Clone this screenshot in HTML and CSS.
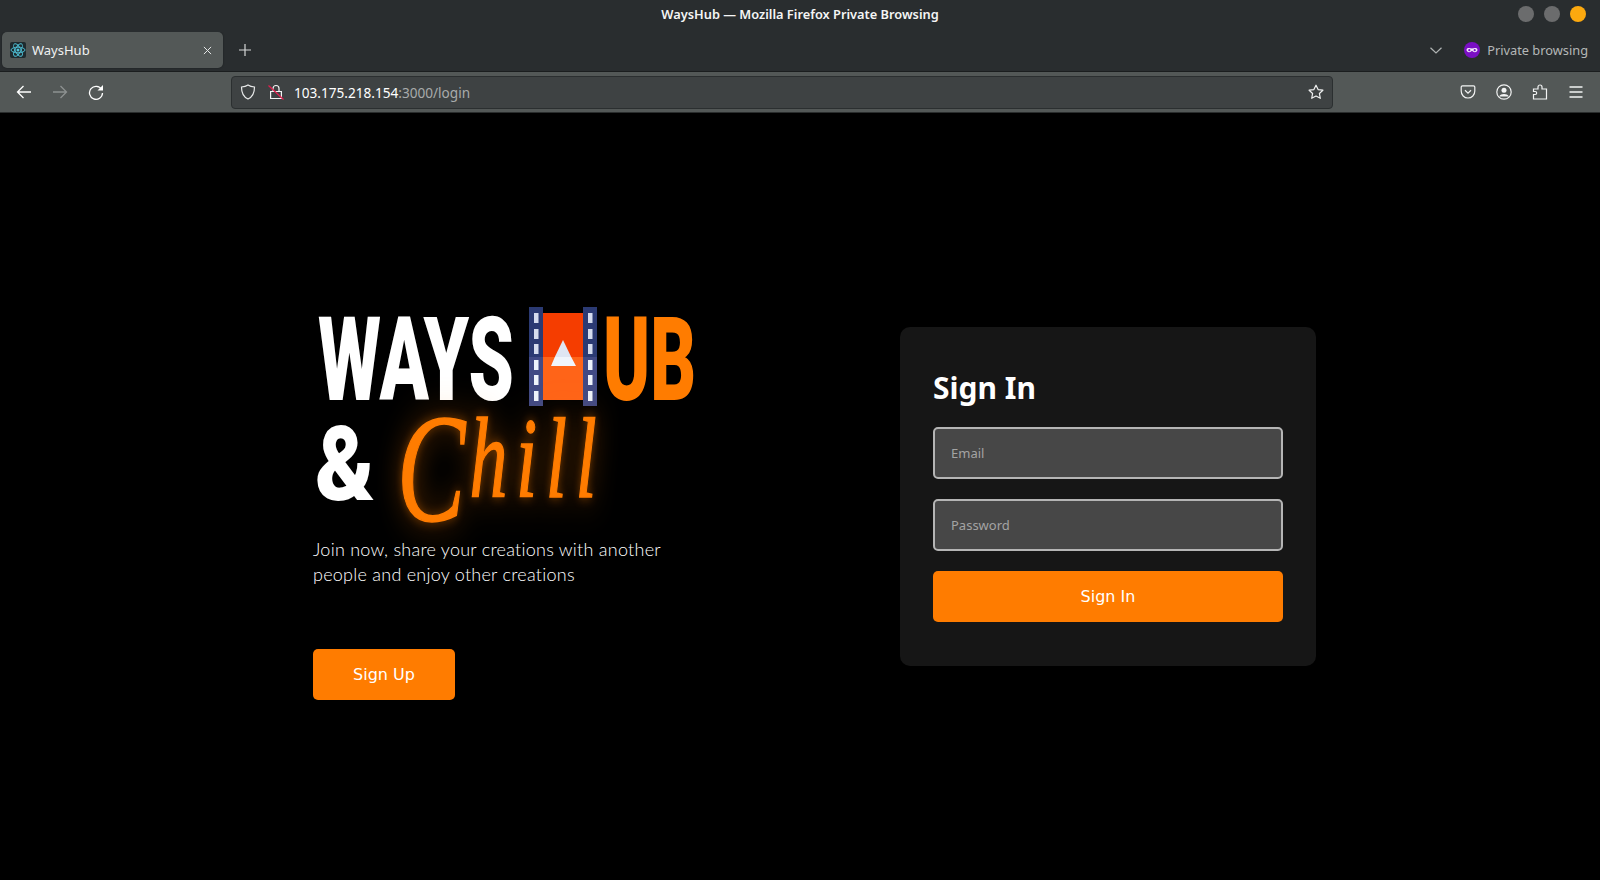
FILE: index.html
```html
<!DOCTYPE html>
<html lang="en">
<head>
    <meta charset="UTF-8">
    <meta name="viewport" content="width=device-width, initial-scale=1.0">
    <title>WaysHub</title>
    <link rel="stylesheet" href="styles.css">
</head>
<body>
    <div class="titlebar">
        <span class="window-title">WaysHub — Mozilla Firefox Private Browsing</span>
        <div class="window-buttons">
            <span class="dot"></span>
            <span class="dot"></span>
            <span class="dot dot-close"></span>
        </div>
    </div>
    <div class="tabstrip">
        <div class="tab">
            <svg class="favicon" viewBox="0 0 16 16">
                <rect width="16" height="16" rx="2" fill="#1f2a2e"/>
                <circle cx="8" cy="8" r="1.5" fill="#4fc3d9"/>
                <g fill="none" stroke="#4fc3d9" stroke-width="0.9">
                    <ellipse cx="8" cy="8" rx="7" ry="2.8"/>
                    <ellipse cx="8" cy="8" rx="7" ry="2.8" transform="rotate(60 8 8)"/>
                    <ellipse cx="8" cy="8" rx="7" ry="2.8" transform="rotate(120 8 8)"/>
                </g>
            </svg>
            <span class="tab-label">WaysHub</span>
            <svg class="tab-close" viewBox="0 0 10 10"><path d="M1 1l8 8M9 1l-8 8" stroke="#e6e8e8" stroke-width="1.1" fill="none"/></svg>
        </div>
        <svg class="new-tab" viewBox="0 0 12 12"><path d="M6 0v12M0 6h12" stroke="#d5d8d8" stroke-width="1.2" fill="none"/></svg>
        <svg class="tab-list" viewBox="0 0 12 7"><path d="M0.5 0.8L6 6l5.5-5.2" stroke="#b0b4b4" stroke-width="1.2" fill="none"/></svg>
        <div class="private">
            <svg class="private-icon" viewBox="0 0 16 16">
                <circle cx="8" cy="8" r="8" fill="#7a0fc4"/>
                <path d="M2.6 7.2C3 5.9 5.4 5.6 8 6.6c2.6-1 5-.7 5.4.6.4 1.6-.8 3-2.6 3-1.2 0-2-.7-2.8-1.4-.8.7-1.600 1.400-2.800 1.400-1.800 0-3-1.400-2.600-3z" fill="#f3e8fb"/>
                <circle cx="5.3" cy="8.2" r="1.1" fill="#7a0fc4"/>
                <circle cx="10.7" cy="8.2" r="1.1" fill="#7a0fc4"/>
            </svg>
            <span>Private browsing</span>
        </div>
    </div>
    <div class="navbar">
        <div class="nav-group">
            <div class="nav-btn">
                <svg viewBox="0 0 16 16"><path d="M15 8H1.5M7.5 2L1.5 8l6 6" stroke="#fff" stroke-width="1.3" fill="none"/></svg>
            </div>
            <div class="nav-btn">
                <svg viewBox="0 0 16 16"><path d="M1 8h13.5M8.5 2l6 6-6 6" stroke="#8d9191" stroke-width="1.3" fill="none"/></svg>
            </div>
            <div class="nav-btn">
                <svg viewBox="0 0 16 16"><path d="M13.6 5.5A6.5 6.5 0 1 0 14.5 9" stroke="#fff" stroke-width="1.3" fill="none"/><path d="M15 1v5.500H9.500z" fill="#fff"/></svg>
            </div>
        </div>
        <div class="urlbar">
            <svg class="url-icon" viewBox="0 0 16 16"><path d="M8 1c2 1.300 4 1.800 6.500 2 0 5-.8 9.500-6.500 12C2.300 12.500 1.500 8 1.500 3 4 2.800 6 2.300 8 1z" stroke="#e8eaea" stroke-width="1.2" fill="none"/></svg>
            <svg class="url-icon lock" viewBox="0 0 16 16">
                <path d="M5 7.500V4.500a3 3 0 0 1 6 0V7.500M2.600 7.500h10.800v7H2.600z" stroke="#f2f3f3" stroke-width="1.2" fill="none"/>
                <path d="M0.500 1.500l15 14" stroke="#e0204f" stroke-width="1.300"/>
            </svg>
            <span class="url"><span class="url-host">103.175.218.154</span>:3000/login</span>
            <svg class="url-star" viewBox="0 0 16 16"><path d="M8 1.200l2.100 4.400 4.800.6-3.500 3.300.9 4.800L8 12l-4.300 2.300.9-4.800L1.100 6.200l4.800-.6z" stroke="#f0f1f1" stroke-width="1.2" stroke-linejoin="round" fill="none"/></svg>
        </div>
        <div class="nav-group">
            <div class="nav-btn">
                <svg viewBox="0 0 16 16"><path d="M2.500 1.800h11c.8 0 1.300.5 1.300 1.300v4A6.800 6.800 0 0 1 8 14a6.800 6.800 0 0 1-6.800-6.900v-4c0-.8.5-1.300 1.300-1.300z" stroke="#f2f3f3" stroke-width="1.2" fill="none"/><path d="M5 6.300l3 2.900 3-2.900" stroke="#f2f3f3" stroke-width="1.2" fill="none"/></svg>
            </div>
            <div class="nav-btn">
                <svg viewBox="0 0 16 16"><circle cx="8" cy="8" r="7.200" stroke="#f2f3f3" stroke-width="1.2" fill="none"/><circle cx="8" cy="6.300" r="2.500" fill="#f2f3f3"/><path d="M3.300 12.200c.8-1.500 2.600-2.300 4.700-2.300s3.900.8 4.700 2.300v.4H3.300z" fill="#f2f3f3"/></svg>
            </div>
            <div class="nav-btn">
                <svg viewBox="0 0 16 16"><path d="M6.500 15H1.500v-4.500h1.700a1.500 1.500 0 0 0 0-3H1.500V5H6V3a2 2 0 0 1 4 0v2h4.500v10H6.500" stroke="#f2f3f3" stroke-width="1.2" fill="none"/></svg>
            </div>
            <div class="nav-btn">
                <svg viewBox="0 0 16 16"><path d="M1.500 3h13M1.500 8h13M1.500 13h13" stroke="#f2f3f3" stroke-width="1.3" fill="none"/></svg>
            </div>
        </div>
    </div>
    <main class="page">
        <section class="intro">
            <svg class="logo" viewBox="0 0 400 240" width="400" height="240">
                <text class="logo-word logo-white" x="5" y="107" textLength="196" lengthAdjust="spacingAndGlyphs">WAYS</text>
                <text class="logo-word logo-orange" x="290" y="107" textLength="93" lengthAdjust="spacingAndGlyphs">UB</text>
                <rect x="230" y="20" width="40" height="44" fill="#f53d00"/>
                <rect x="230" y="64" width="40" height="43" fill="#ff6418"/>
                <rect x="216" y="14" width="14" height="50" fill="#2b3a73"/>
                <rect x="216" y="64" width="14" height="49" fill="#414a85"/>
                <rect x="270" y="14" width="14" height="50" fill="#2b3a73"/>
                <rect x="270" y="64" width="14" height="49" fill="#414a85"/>
                <g fill="#d5dcee">
                    <rect x="221" y="20" width="4.500" height="10"/><rect x="221" y="36" width="4.500" height="10"/><rect x="221" y="51" width="4.500" height="10"/>
                    <rect x="275" y="20" width="4.500" height="10"/><rect x="275" y="36" width="4.500" height="10"/><rect x="275" y="51" width="4.500" height="10"/>
                </g>
                <g fill="#eef3fb">
                    <rect x="221" y="67" width="4.500" height="10"/><rect x="221" y="82" width="4.500" height="10"/><rect x="221" y="98" width="4.500" height="10"/>
                    <rect x="275" y="67" width="4.500" height="10"/><rect x="275" y="82" width="4.500" height="10"/><rect x="275" y="98" width="4.500" height="10"/>
                </g>
                <path d="M250 47l-8.200 17h16.400z" fill="#dfe6f3"/>
                <path d="M241.800 64L238 73h25l-4.800-9z" fill="#f0f5fc"/>
                <text class="logo-amp" x="2" y="207" textLength="60" lengthAdjust="spacingAndGlyphs">&amp;</text>
                <text class="logo-chill" transform="translate(84 0) scale(0.66 1)" x="0" y="228"><tspan class="chill-big">C</tspan><tspan class="chill-small" x="110" y="204">hill</tspan></text>
            </svg>
            <p class="tagline">Join now, share your creations with another people and enjoy other creations</p>
            <button class="btn btn-signup" type="button">Sign Up</button>
        </section>
        <form class="card">
            <h1 class="card-title">Sign In</h1>
            <input class="field" type="email" placeholder="Email">
            <input class="field" type="password" placeholder="Password">
            <button class="btn btn-wide" type="button">Sign In</button>
        </form>
    </main>
</body>
</html>
```
FILE: styles.css
```css
* {
    box-sizing: border-box;
}
html, body {
    height: 100%;
}
body {
    margin: 0;
    display: flex;
    flex-direction: column;
    overflow: hidden;
    background-color: #000;
    font-family: "Noto Sans", sans-serif;
}
svg {
    display: block;
}

/* browser chrome */
.titlebar {
    position: relative;
    height: 32px;
    flex: none;
    display: flex;
    align-items: center;
    justify-content: center;
    background-color: #292d2f;
}
.window-title {
    margin-top: -4px;
    color: #f4f5f5;
    font-size: 12.800px;
    font-weight: 600;
}
.window-buttons {
    position: absolute;
    top: 6px;
    right: 14px;
    display: flex;
    gap: 10px;
}
.dot {
    width: 16px;
    height: 16px;
    border-radius: 50%;
    background-color: #6b6c6d;
}
.dot-close {
    background-color: #fca90f;
}
.tabstrip {
    height: 39px;
    flex: none;
    display: flex;
    align-items: flex-start;
    padding-left: 2px;
    background-color: #292d2f;
}
.tab {
    width: 221px;
    height: 36px;
    display: flex;
    align-items: center;
    padding: 0 10px 0 8px;
    border-radius: 5px;
    background-color: #535857;
    box-shadow: 0 0 2px rgba(0, 0, 0, 0.4);
}
.favicon {
    width: 16px;
    height: 16px;
    margin-right: 6px;
}
.tab-label {
    flex: 1;
    color: #f0f1f1;
    font-size: 13px;
}
.tab-close {
    width: 9px;
    height: 9px;
    margin-right: 1px;
}
.new-tab {
    width: 12px;
    height: 12px;
    margin: 12px 0 0 16px;
}
.tab-list {
    width: 12px;
    height: 7px;
    margin: 15px 0 0 auto;
}
.private {
    display: flex;
    align-items: center;
    gap: 7px;
    height: 36px;
    margin-left: 22px;
    padding-right: 12px;
    color: #b4b7b7;
    font-size: 12.800px;
}
.private-icon {
    width: 16px;
    height: 16px;
}
.navbar {
    height: 42px;
    flex: none;
    display: flex;
    align-items: center;
    padding: 0 6px;
    border-top: 1px solid #1b1e1f;
    border-bottom: 1px solid #2a2d2d;
    background-color: #535857;
}
.nav-group {
    display: flex;
}
.nav-btn {
    width: 36px;
    height: 32px;
    display: flex;
    align-items: center;
    justify-content: center;
}
.nav-btn svg {
    width: 16px;
    height: 16px;
}
.urlbar {
    flex: 1;
    height: 33px;
    display: flex;
    align-items: center;
    margin: 0 117px;
    padding: 0 8px;
    border: 1px solid #2b2f30;
    border-radius: 4px;
    background-color: #3e4243;
}
.url-icon {
    width: 16px;
    height: 16px;
}
.lock {
    margin-left: 12px;
}
.url {
    flex: 1;
    margin-left: 10px;
    color: #a8abab;
    font-size: 13.600px;
}
.url-host {
    color: #fff;
}
.url-star {
    width: 16px;
    height: 16px;
}

/* login page */
.page {
    flex: 1;
    display: flex;
    align-items: center;
    padding-left: 313px;
    background-color: #000;
}
.intro {
    width: 587px;
}
.logo {
    overflow: visible;
}
.logo-word {
    font-family: "Roboto", sans-serif;
    font-size: 116px;
    font-weight: 900;
}
.logo-white {
    fill: #fff;
}
.logo-orange {
    fill: #ff7c00;
}
.logo-amp {
    font-family: "Roboto", sans-serif;
    font-size: 104px;
    font-weight: 900;
    fill: #fff;
}
.logo-chill {
    font-family: "Liberation Serif", serif;
    font-style: italic;
    fill: #ff7c00;
    stroke: #ff7c00;
    stroke-width: 1.500px;
    filter: drop-shadow(0 0 6px rgba(255, 124, 0, 0.4)) drop-shadow(0 0 18px rgba(255, 124, 0, 0.4));
}
.chill-big {
    font-size: 155px;
}
.chill-small {
    font-size: 115px;
    letter-spacing: 13px;
}
.tagline {
    width: 360px;
    margin: 4px 0 62px;
    color: #fff;
    font-family: "Lato", sans-serif;
    font-size: 18px;
    font-weight: 300;
    letter-spacing: 0.25px;
    line-height: 25px;
}
.btn {
    display: block;
    height: 51px;
    border: none;
    border-radius: 5px;
    background-color: #ff7c00;
    color: #fff;
    font-family: "DejaVu Sans", sans-serif;
    font-size: 16px;
}
.btn-signup {
    width: 142px;
}
.btn-wide {
    width: 100%;
}
.card {
    width: 416px;
    height: 339px;
    padding: 33px;
    border-radius: 10px;
    background-color: #161616;
}
.card-title {
    margin: 0 0 12px;
    color: #fff;
    font-size: 30px;
    font-weight: 700;
    line-height: 55px;
}
.field {
    display: block;
    width: 100%;
    height: 52px;
    margin-bottom: 20px;
    padding: 0 16px;
    border: 2px solid #b5b5b5;
    border-radius: 5px;
    background-color: #474747;
    color: #fff;
    font-family: "Noto Sans", sans-serif;
    font-size: 13px;
}
.field::placeholder {
    color: #a3a3a3;
    opacity: 1;
}
```
